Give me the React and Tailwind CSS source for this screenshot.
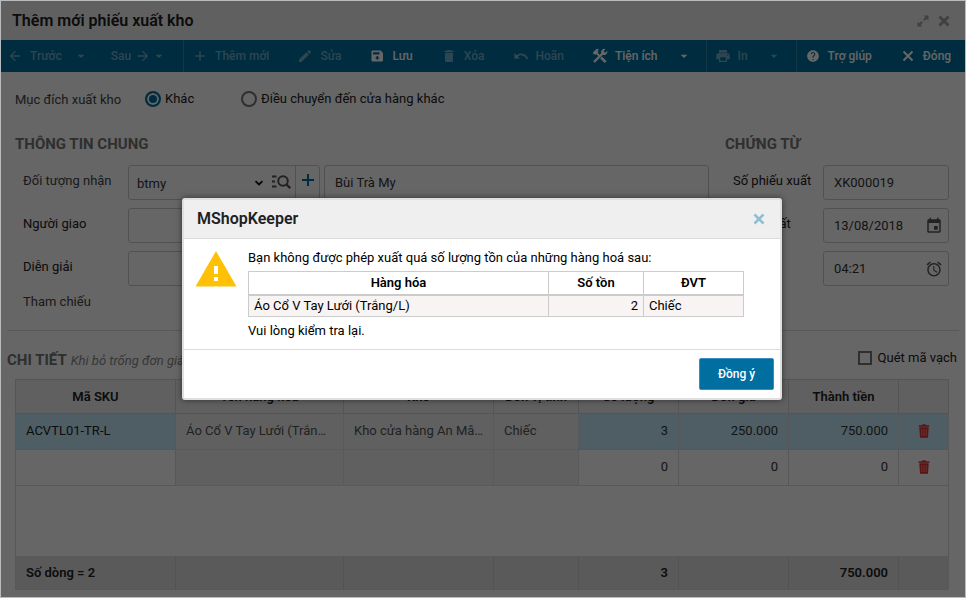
import { useState } from 'react'
import {
  MdAdd,
  MdAlarm,
  MdArrowBack,
  MdArrowDropDown,
  MdArrowForward,
  MdDelete,
  MdEdit,
  MdEvent,
  MdHelp,
  MdPrint,
} from 'react-icons/md'

const rows = [
  { sku: 'ACVTL01-TR-L', name: 'Áo Cổ V Tay Lưới (Trắng/L)', store: 'Kho cửa hàng An Mâu Thi', unit: 'Chiếc', qty: '3', price: '250.000', total: '750.000' },
  { sku: '', name: '', store: '', unit: '', qty: '0', price: '0', total: '0' },
]

const headers = ['Mã SKU', 'Tên hàng hóa', 'Kho', 'Đơn vị tính', 'Số lượng', 'Đơn giá', 'Thành tiền', '']

function CloseIcon({ width = 2 }) {
  return (
    <svg viewBox="0 0 16 16" className="w-4 h-4" fill="none" stroke="currentColor" strokeWidth={width}>
      <path d="m3.500 3.500 9 9M12.500 3.500l-9 9" />
    </svg>
  )
}

function ExpandIcon() {
  return (
    <svg viewBox="0 0 14 14" className="w-3.5 h-3.5" fill="currentColor">
      <path d="M7.500 1.500h5v5l-1.700-1.700-2.200 2.200-1.500-1.500 2.200-2.200ZM6.500 12.500h-5v-5l1.700 1.700 2.200-2.200 1.500 1.500-2.200 2.200Z" />
    </svg>
  )
}

function ChevronIcon() {
  return (
    <svg viewBox="0 0 10 10" className="w-2.5 h-2.5" fill="none" stroke="#111" strokeWidth="1.800">
      <path d="m1.500 3.200 3.500 3.300 3.500-3.300" />
    </svg>
  )
}

function SaveIcon() {
  return (
    <svg viewBox="0 0 16 16" className="w-4 h-4" fill="currentColor">
      <path fillRule="evenodd" d="M3.500 2.500h8.200L14 5v7.500a1 1 0 0 1-1 1H3.500a1 1 0 0 1-1-1v-9a1 1 0 0 1 1-1ZM4 4.200v2.300h6.500V4.200ZM7.400 8v1.500H6l2.300 2.500 2.300-2.500H9.200V8Z" />
    </svg>
  )
}

function UndoIcon() {
  return (
    <svg viewBox="0 0 16 16" className="w-4 h-4" fill="none" stroke="currentColor" strokeWidth="1.800">
      <path d="M3.500 8.500C7 5 12.500 6 14.500 11" />
      <path d="M1.300 4.800v6h5.500Z" fill="currentColor" stroke="none" />
    </svg>
  )
}

// crossed hammer and wrench
function ToolsIcon() {
  return (
    <svg viewBox="0 0 16 16" className="w-4 h-4" fill="none" stroke="currentColor">
      <path d="m9 9.500 4.700 4.700" strokeWidth="2.600" />
      <path d="M4.500 5 8 8.500" strokeWidth="1.800" />
      <path d="M.8 4.600 4.800.8l2.300.4L5.600 2.700l1 1-3.300 3.300-1-1-.6.500Z" fill="currentColor" stroke="none" />
      <path d="m2 14 8.500-8.500" strokeWidth="2.400" />
      <path d="M13.600 1 11.900 2.700l.2 1.500 1.500.2 1.700-1.700a3.400 3.400 0 0 1-4.600 4.100L9.200 5.300A3.400 3.400 0 0 1 13.600 1Z" fill="currentColor" stroke="none" />
    </svg>
  )
}

function SearchListIcon() {
  return (
    <svg viewBox="0 0 20 16" className="w-5 h-4" fill="none" stroke="currentColor" strokeWidth="2">
      <path d="M1 2.500h4.500M1 7.500h3M1 12.500h4.500" />
      <circle cx="12" cy="7" r="4.800" />
      <path d="m15.500 10.500 3.700 3.700" strokeWidth="2.400" />
    </svg>
  )
}

function TrashIcon() {
  return (
    <svg viewBox="0 0 12 14" className="w-3 h-3.5">
      <path d="M.7 1.200h3.200L4.700.3h2.600l.8.900h3.200v1.600H.7ZM1.300 3.300h9.400l-.7 10.400H2Z" fill="#e53030" />
      <path d="m3.700 5 .3 7M6 5v7M8.300 5 8 12" stroke="#f3a0a0" strokeWidth=".8" />
    </svg>
  )
}

function WarningIcon() {
  return (
    <svg viewBox="0 0 42 36" className="w-[42px] h-9 shrink-0">
      <path d="M21 0 41.500 35.500H.5Z" fill="#ffc107" />
      <path d="M19 15h4v8h-4ZM19 26h4v4h-4Z" fill="#fff" />
    </svg>
  )
}

function ToolButton({ icon, label, disabled }) {
  return (
    <button
      disabled={disabled}
      className="flex items-center gap-[7px] whitespace-nowrap text-white disabled:text-white/45"
    >
      {icon}
      {label}
    </button>
  )
}

function CaretButton({ label, disabled }) {
  return (
    <button disabled={disabled} aria-label={label} className="text-white disabled:text-white/45">
      <MdArrowDropDown className="w-4 h-4" />
    </button>
  )
}

function Toolbar() {
  const icon = 'w-4 h-4'
  return (
    <div className="flex h-8 bg-[#006e9f] text-xs font-medium">
      <div className="flex items-center border-r border-white/20 pl-1.5 pr-4">
        <ToolButton disabled icon={<MdArrowBack className={icon} />} label="Trước" />
        <span className="w-[11px]" />
        <CaretButton disabled label="Chọn phiếu trước" />
        <button disabled className="ml-[22px] flex items-center gap-1 text-white/45">
          Sau
          <MdArrowForward className={icon} />
        </button>
        <CaretButton disabled label="Chọn phiếu sau" />
      </div>
      <div className="flex items-center gap-7 border-r border-white/20 pl-2 pr-3.5">
        <ToolButton disabled icon={<MdAdd className={icon} />} label="Thêm mới" />
        <ToolButton disabled icon={<MdEdit className={icon} />} label="Sửa" />
        <ToolButton icon={<SaveIcon />} label="Lưu" />
        <ToolButton disabled icon={<MdDelete className={icon} />} label="Xóa" />
        <ToolButton disabled icon={<UndoIcon />} label="Hoãn" />
        <div className="flex items-center gap-[18px]">
          <ToolButton icon={<ToolsIcon />} label="Tiện ích" />
          <CaretButton label="Mở tiện ích" />
        </div>
      </div>
      <div className="flex items-center gap-[18px] border-r border-white/20 pl-2 pr-3.5">
        <ToolButton disabled icon={<MdPrint className={icon} />} label="In" />
        <CaretButton disabled label="Chọn mẫu in" />
      </div>
      <div className="flex items-center gap-7 pl-2">
        <ToolButton icon={<MdHelp className="mx-px w-3.5 h-3.5" />} label="Trợ giúp" />
        <ToolButton icon={<CloseIcon />} label="Đóng" />
      </div>
    </div>
  )
}

function Purpose() {
  const [purpose, setPurpose] = useState('other')
  const radio =
    'appearance-none w-4 h-4 rounded-full border-2 border-[#757575] checked:border-[#006e9f] checked:bg-[#006e9f] checked:shadow-[inset_0_0_0_2px_white]'

  return (
    <div role="radiogroup" aria-labelledby="purpose-label" className="flex items-center px-3.5 pt-4">
      <span id="purpose-label" className="w-[130px] pt-0.5 text-[#444]">Mục đích xuất kho</span>
      <label className="flex w-24 items-center gap-1">
        <input type="radio" name="purpose" className={radio} checked={purpose === 'other'} onChange={() => setPurpose('other')} />
        Khác
      </label>
      <label className="flex items-center gap-1">
        <input type="radio" name="purpose" className={radio} checked={purpose === 'transfer'} onChange={() => setPurpose('transfer')} />
        Điều chuyển đến cửa hàng khác
      </label>
    </div>
  )
}

function GeneralInfo() {
  const input = 'h-[35px] w-full min-w-0 rounded-[3px] border border-[#cbcbcb] px-2.5 text-[#333]'
  const row = 'flex items-start'
  const label = 'w-[105px] shrink-0 pt-1.5'

  return (
    <section className="flex-1 min-w-0">
      <h2 className="text-[15px] font-bold leading-5 text-[#757575]">THÔNG TIN CHUNG</h2>
      <div className="mt-[11px] flex flex-col gap-2 pl-2">
        <div className={row}>
          <label htmlFor="receiver" className={label + ' text-[#444]'}>Đối tượng nhận</label>
          <div className="mr-1 flex h-[35px] w-48 shrink-0 rounded-[3px] border border-[#cbcbcb]">
            <div className="relative flex-1">
              <select id="receiver" className="h-full w-full appearance-none px-2 pt-0.5 text-[#333]">
                <option>btmy</option>
              </select>
              <span className="pointer-events-none absolute right-[31px] top-3">
                <ChevronIcon />
              </span>
              <button aria-label="Tìm đối tượng" className="absolute right-1 top-2 text-[#555]">
                <SearchListIcon />
              </button>
            </div>
            <button aria-label="Thêm đối tượng" className="flex w-6 justify-center border-l border-[#cbcbcb] pt-1.5 text-[#006e9f]">
              <svg viewBox="0 0 16 16" className="w-4 h-4" stroke="currentColor" strokeWidth="2">
                <path d="M8 2v12M2 8h12" />
              </svg>
            </button>
          </div>
          <input aria-label="Tên đối tượng" className={input} defaultValue="Bùi Trà My" />
        </div>
        <div className={row}>
          <label htmlFor="deliverer" className={label}>Người giao</label>
          <input id="deliverer" className={input} />
        </div>
        <div className={row}>
          <label htmlFor="note" className={label}>Diễn giải</label>
          <input id="note" className={input} />
        </div>
        <span className="leading-4 text-[#444]">Tham chiếu</span>
      </div>
    </section>
  )
}

function VoucherInfo() {
  const row = 'flex items-start'
  const label = 'w-[90px] shrink-0 pt-1.5'
  const field = 'flex h-[35px] flex-1 min-w-0 items-center rounded-[3px] border border-[#cbcbcb] px-2.5 text-[#333]'

  return (
    <section className="w-56 shrink-0">
      <h2 className="text-[15px] font-bold leading-5 text-[#757575]">CHỨNG TỪ</h2>
      <div className="mt-[11px] flex flex-col gap-2 pl-2">
        <div className={row}>
          <label htmlFor="voucher-no" className={label}>Số phiếu xuất</label>
          <input id="voucher-no" className={field} defaultValue="XK000019" />
        </div>
        <div className={row}>
          <label htmlFor="voucher-date" className={label}>Ngày xuất</label>
          <div className={field}>
            <input id="voucher-date" className="w-full min-w-0" defaultValue="13/08/2018" />
            <MdEvent className="-mr-[5px] w-[18px] h-[18px] shrink-0 text-[#555]" />
          </div>
        </div>
        <div className={row}>
          <label htmlFor="voucher-time" className={label}>Giờ xuất</label>
          <div className={field}>
            <input id="voucher-time" className="w-full min-w-0" defaultValue="04:21" />
            <MdAlarm className="-mr-[5px] w-[18px] h-[18px] shrink-0 text-[#555]" />
          </div>
        </div>
      </div>
    </section>
  )
}

function DetailTable() {
  return (
    <table className="w-full table-fixed border-collapse border border-[#dcdcdc]">
      <colgroup>
        <col className="w-40" />
        <col />
        <col className="w-[150px]" />
        <col className="w-[85px]" />
        <col className="w-[100px]" />
        <col className="w-[110px]" />
        <col className="w-[110px]" />
        <col className="w-[50px]" />
      </colgroup>
      <thead>
        <tr className="h-[34px] bg-[#f0f0f0]">
          {headers.map((text) => (
            <th key={text} className="border border-[#d4d4d4] pt-px font-semibold">{text}</th>
          ))}
        </tr>
      </thead>
      <tbody>
        {rows.map((row, i) => {
          const edit = i === 0 ? 'border border-[#dcdcdc] bg-[#c5ecfc] px-2.5 pb-0.5' : 'border border-[#dcdcdc] px-2.5 pb-0.5'
          const locked = 'truncate border border-[#e0e0e0] bg-[#efefef] pl-2.5 pb-0.5 text-[#555]'
          return (
            <tr key={i} className="h-9">
              <td className={edit}>{row.sku}</td>
              <td className={locked + ' pr-2.5'}>{row.name}</td>
              <td className={locked + ' pr-1.5'}>{row.store}</td>
              <td className={locked + ' pr-1.5'}>{row.unit}</td>
              <td className={edit + ' text-right text-[#333]'}>{row.qty}</td>
              <td className={edit + ' text-right text-[#333]'}>{row.price}</td>
              <td className={edit + ' text-right text-[#333]'}>{row.total}</td>
              <td className={edit}>
                <button aria-label="Xóa dòng" className="flex w-full justify-center">
                  <TrashIcon />
                </button>
              </td>
            </tr>
          )
        })}
        <tr className="h-[70px]">
          <td colSpan={8} />
        </tr>
      </tbody>
      <tfoot>
        <tr className="h-[34px] bg-[#e1e1e1] font-semibold">
          <td className="border-r border-[#cfcfcf] px-2.5 pt-0.5">Số dòng = 2</td>
          <td className="border-r border-[#cfcfcf]" />
          <td className="border-r border-[#cfcfcf]" />
          <td className="border-r border-[#cfcfcf]" />
          <td className="border-r border-[#cfcfcf] px-2.5 pt-0.5 text-right">3</td>
          <td className="border-r border-[#cfcfcf]" />
          <td className="border-r border-[#cfcfcf] px-2.5 pt-0.5 text-right">750.000</td>
          <td />
        </tr>
      </tfoot>
    </table>
  )
}

function StockDialog({ onClose }) {
  return (
    <div className="absolute inset-0 flex items-center justify-center bg-black/60 pr-0.5">
      <div
        role="dialog"
        aria-labelledby="dialog-title"
        className="w-[600px] max-w-full rounded-[3px] border-2 border-[#dfdfdf] bg-white text-black shadow-[0_0_6px_rgba(0,0,0,0.5)]"
      >
        <div className="flex h-[39px] items-center justify-between border-b border-[#dcdcdc] bg-[#efefef] px-[13px]">
          <h1 id="dialog-title" className="text-base font-semibold text-[#212121]">MShopKeeper</h1>
          <button aria-label="Đóng" onClick={onClose} className="text-[#8fbdd3]">
            <CloseIcon width={2.5} />
          </button>
        </div>
        <div className="flex gap-[11px] border-b border-[#dcdcdc] px-[11px] py-2">
          <div className="pt-1">
            <WarningIcon />
          </div>
          <div>
            <p className="h-6 leading-[22px]">Bạn không được phép xuất quá số lượng tồn của những hàng hoá sau:</p>
            <table className="w-[496px] table-fixed border-collapse">
              <thead>
                <tr className="h-[23px]">
                  <th className="w-[300px] border border-b-2 border-[#cbcbcb] font-semibold">Hàng hóa</th>
                  <th className="w-[95px] border border-b-2 border-[#cbcbcb] font-semibold">Số tồn</th>
                  <th className="border border-b-2 border-[#cbcbcb] font-semibold">ĐVT</th>
                </tr>
              </thead>
              <tbody>
                <tr className="h-[22px] bg-[#f8f4f4]">
                  <td className="border border-[#cbcbcb] px-[5px]">Áo Cổ V Tay Lưới (Trắng/L)</td>
                  <td className="border border-[#cbcbcb] px-[5px] text-right">2</td>
                  <td className="border border-[#cbcbcb] px-[5px]">Chiếc</td>
                </tr>
              </tbody>
            </table>
            <p className="pt-1 leading-5">Vui lòng kiểm tra lại.</p>
          </div>
        </div>
        <div className="flex justify-end px-1.5 py-2">
          <button
            onClick={onClose}
            className="h-8 w-[75px] rounded-[2px] border border-[#3a8cc4] bg-[#006e9f] text-xs font-medium text-white"
          >
            Đồng ý
          </button>
        </div>
      </div>
    </div>
  )
}

export default function App() {
  const [showDialog, setShowDialog] = useState(true)

  return (
    <div className="relative min-h-screen border border-[#b8bcbc] bg-white font-['Roboto',sans-serif] text-[13px] leading-5 text-[#212121]">
      <header className="flex h-[39px] items-center justify-between bg-[#f0f0f0] pl-[11px] pr-[13px]">
        <h1 className="text-base font-semibold">Thêm mới phiếu xuất kho</h1>
        <div className="flex items-center gap-1.5 text-[#a3a3a3]">
          <button aria-label="Phóng to">
            <ExpandIcon />
          </button>
          <button aria-label="Đóng cửa sổ">
            <CloseIcon width={3} />
          </button>
        </div>
      </header>
      <Toolbar />
      <main>
        <Purpose />
        <div className="mt-6 flex gap-4 pl-3.5 pr-4">
          <GeneralInfo />
          <VoucherInfo />
        </div>
        <hr className="mx-1.5 mt-5 border-[#dcdcdc]" />
        <div className="mt-[17px] flex items-center justify-between pl-1.5 pr-2">
          <div className="flex items-baseline gap-1">
            <h2 className="text-[15px] font-bold leading-6 text-[#757575]">CHI TIẾT</h2>
            <span className="italic text-[#8a8a8a]">Khi bỏ trống đơn giá, chương trình sẽ tự động tính giá xuất kho</span>
          </div>
          <label className="flex items-center gap-1.5 pb-1">
            <input type="checkbox" className="appearance-none w-3.5 h-3.5 border-2 border-[#757575]" />
            Quét mã vạch
          </label>
        </div>
        <div className="pl-3.5 pr-4 pt-[7px]">
          <DetailTable />
        </div>
      </main>
      {showDialog && <StockDialog onClose={() => setShowDialog(false)} />}
    </div>
  )
}
